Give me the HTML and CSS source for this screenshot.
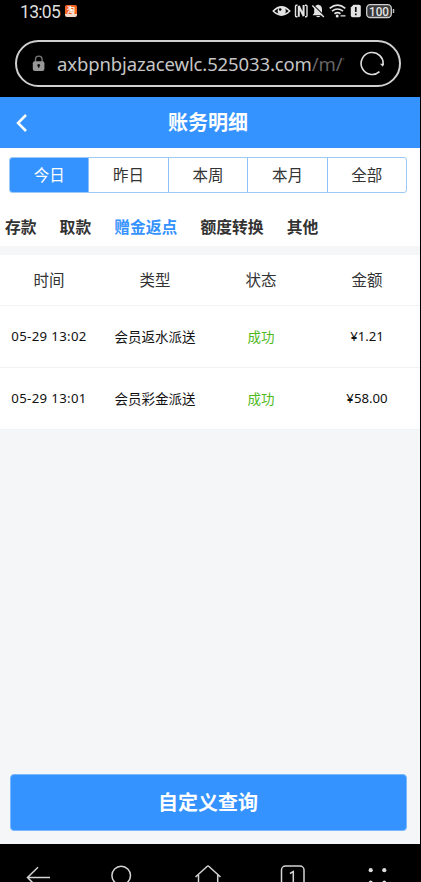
FILE: index.html
```html
<!DOCTYPE html>
<html lang="zh-CN">
<head>
<meta charset="utf-8">
<title>账务明细</title>
<link rel="stylesheet" href="styles.css">
</head>
<body>
<div class="phone">
  <div class="status">
    <span class="clock">13:05</span>
    <span class="app"><span class="app-name">淘</span></span>
    <svg class="indicators" width="124" height="18" viewBox="272 2 124 18" fill="none">
      <path d="M273.300 11Q281.500 2.800 289.700 11Q281.500 19.200 273.300 11Z" stroke="#e4e4e4" stroke-width="1.600"/>
      <circle cx="281.700" cy="11" r="4.100" fill="#e4e4e4"/><circle cx="280.200" cy="9.500" r="1.300" fill="#000"/>
      <path d="M297.500 5.300h-1q-1 0-1 1v9.500q0 1 1 1h1M305 5.300h1q1 0 1 1v9.500q0 1-1 1h-1" stroke="#e4e4e4" stroke-width="1.400"/>
      <path d="M298.800 16.800V6l4.800 10V5" stroke="#e4e4e4" stroke-width="2"/>
      <path d="M312.600 15.300l1.600-2.300V9.300q0-3.400 3-4.200q.9-1.400 1.800 0q3 .8 3 4.200V13l1.600 2.300zM316 16h4.400q-2.200 2.400-4.400 0" fill="#e4e4e4"/>
      <path d="M313.300 5L325 16.700" stroke="#000" stroke-width="1.200"/><path d="M312.300 5.500L323.800 17" stroke="#e4e4e4" stroke-width="1.400"/>
      <path d="M329.700 8.300Q337.500 2 345.300 8.300M332 11.100q5.500-4.200 11 0M334.500 13.700q3-2.200 6 0" stroke="#e4e4e4" stroke-width="1.700"/>
      <circle cx="337.200" cy="16" r="1.500" fill="#e4e4e4"/><path d="M340.500 15.800h5" stroke="#aaa" stroke-width="1.800"/>
      <path d="M353.500 4.800h5.500q1.800 0 1.800 1.800v8.900q0 1.800-1.800 1.800h-6.400q-1.800 0-1.800-1.800V7.500z" fill="#e4e4e4"/>
      <path d="M355.800 7v5M355.800 13.500v1.800" stroke="#111" stroke-width="1.700"/>
      <rect x="366.700" y="4.700" width="24.600" height="12.800" rx="3.600" fill="#383838" stroke="#cfcfcf" stroke-width="1.300"/>
      <path d="M393.500 9v4" stroke="#bbb" stroke-width="1.500"/>
      <text class="battery" x="379" y="15.500" text-anchor="middle" textLength="20" lengthAdjust="spacingAndGlyphs">100</text>
    </svg>
  </div>
  <div class="address">
    <svg class="lock" width="14" height="17" viewBox="0 0 14 17"><path d="M3.500 7V4.400a3.300 3.300 0 0 1 6.600 0V7" fill="none" stroke="#777" stroke-width="1.400"/><rect x=".8" y="6.300" width="11.600" height="9.700" rx="2" fill="#989898"/><circle cx="6.700" cy="10.400" r="1.400" fill="#111"/><path d="M6.700 10v3" stroke="#111"/></svg>
    <span class="url">axbpnbjazacewlc.525033.com<span class="path">/m/</span><span class="cut">'</span></span>
    <svg class="reload" width="26" height="26" viewBox="0 0 26 26" fill="none"><path d="M20.500 20.600A11 11 0 1 1 24 14" stroke="#ddd" stroke-width="1.600"/><path d="M20.900 12.800h4.200l-1.200 3z" fill="#ddd"/></svg>
  </div>
  <main class="page">
    <header class="title">
      <svg class="back" width="14" height="20" viewBox="0 0 14 20"><path d="M11 2L3 10l8 8" fill="none" stroke="#fff" stroke-width="2.500"/></svg>
      <h1>账务明细</h1>
    </header>
    <div class="filters">
      <div class="segments"><span class="seg on">今日</span><span class="seg">昨日</span><span class="seg">本周</span><span class="seg">本月</span><span class="seg">全部</span></div>
      <nav class="tabs"><span>存款</span><span>取款</span><span class="active">赠金返点</span><span>额度转换</span><span>其他</span></nav>
    </div>
    <section class="table">
      <div class="row head"><span>时间</span><span>类型</span><span>状态</span><span>金额</span></div>
      <div class="row"><span class="date">05-29 13:02</span><span>会员返水派送</span><span class="ok">成功</span><span class="money">¥1.21</span></div>
      <div class="row"><span class="date">05-29 13:01</span><span>会员彩金派送</span><span class="ok">成功</span><span class="money">¥58.00</span></div>
    </section>
    <button class="query">自定义查询</button>
  </main>
  <svg class="toolbar" width="421" height="38" viewBox="0 844 421 38" fill="none" stroke="#d4d4d4" stroke-width="1.500">
    <path d="M50 877.500H27.500M38 867.300L27.500 877.500L38 888"/>
    <circle cx="121.200" cy="875.500" r="9.300"/><path d="M128 882l5 5"/>
    <path d="M195.500 877L207 866.500q1-.8 2 0L220.500 877M198.500 875v12M217.700 875v12"/>
    <rect x="281.500" y="866" width="22.500" height="22" rx="4"/>
    <path d="M290 873.500l3.300-2V884"/>
    <g fill="#ddd" stroke="none"><circle cx="370.700" cy="870.200" r="2.100"/><circle cx="384.300" cy="870.200" r="2.100"/><circle cx="370.700" cy="882.500" r="2"/><circle cx="384.300" cy="882.500" r="2"/></g>
  </svg>
</div>
</body>
</html>
```
FILE: styles.css
```css
* { box-sizing: border-box; }
body { margin: 0; background: #000; font-family: "Noto Sans CJK SC", sans-serif; }
.phone { width: 421px; height: 882px; overflow: hidden; display: flex; flex-direction: column; background: #000; }
.status { height: 40px; padding: 2px 25px 0 20px; display: flex; align-items: flex-start; }
.clock { width: 45px; font: 17.5px/20px Roboto, sans-serif; letter-spacing: -.7px; color: #dedede; }
.app { width: 12px; height: 12px; margin-top: 3px; border-radius: 2px; overflow: hidden; background: linear-gradient(#f26522 75%, #f3d9ca 75%); }
.app-name { display: block; font-size: 8px; line-height: 9px; font-weight: 700; text-align: center; color: #fff; }
.indicators { margin-left: auto; }
.battery { font: 500 12px Roboto, sans-serif; fill: #e4e4e4; }
.address { height: 47px; margin: 0 20px 0 15px; padding: 0 14px 0 15px; border: 2px solid #cfcfcf; border-radius: 24px; display: flex; align-items: center; }
.lock { flex: none; margin-right: 11px; }
.url { width: 293px; white-space: nowrap; font: 18.500px/26px "Noto Sans", sans-serif; letter-spacing: -.12px; color: #c6c6c6; }
.path { color: #666; }
.cut { color: #444; font-size: 10px; line-height: 10px; vertical-align: 5px; }
.reload { flex: none; margin-left: 9px; }
.page { width: 420px; height: 747px; margin-top: 10px; flex: none; display: flex; flex-direction: column; background: #f4f6f8; }
.title { height: 51px; display: flex; align-items: center; background: #3593ff; color: #fff; }
.back { margin-left: 15px; }
.title h1 { margin: 0 33px 2px 0; flex: 1; text-align: center; font-size: 20px; line-height: 28px; font-weight: 700; }
.filters { height: 98px; padding: 9px 13px 0 9px; background: #fff; }
.segments { height: 36px; display: flex; border: 1px solid #9dcaf5; border-radius: 3px; overflow: hidden; }
.seg { flex: 1; text-align: center; font-size: 15.500px; line-height: 32px; color: #333; border-left: 1px solid #8fc1f5; }
.seg:first-child { border-left: 0; }
.on { color: #fff; background: #3593ff; }
.tabs { display: flex; gap: 23px; margin: 22px 0 0 -4px; font-size: 15.800px; line-height: 24px; font-weight: 700; color: #333; white-space: nowrap; }
.active { color: #3593ff; }
.table { margin-top: 9px; background: #fff; overflow: hidden; }
.row { height: 62px; margin-left: -4px; padding-bottom: 2px; display: grid; grid-template-columns: repeat(4, 106px); align-items: center; text-align: center; font-size: 13.500px; color: #111; border-bottom: 1px solid #f1f2f4; }
.head { height: 51px; font-size: 15.500px; color: #333; }
.date, .money { font-family: "Noto Sans", sans-serif; font-size: 13.200px; }
.date { letter-spacing: .35px; }
.ok { color: #4fb91c; }
.query { width: 397px; height: 57px; margin: auto 0 13px 9.500px; padding: 0 0 2px; border: 1px solid #79b8fa; border-radius: 4px; background: #3593ff; color: #fff; font: 700 20px/28px "Noto Sans CJK SC", sans-serif; }
.toolbar { flex: none; }
```
